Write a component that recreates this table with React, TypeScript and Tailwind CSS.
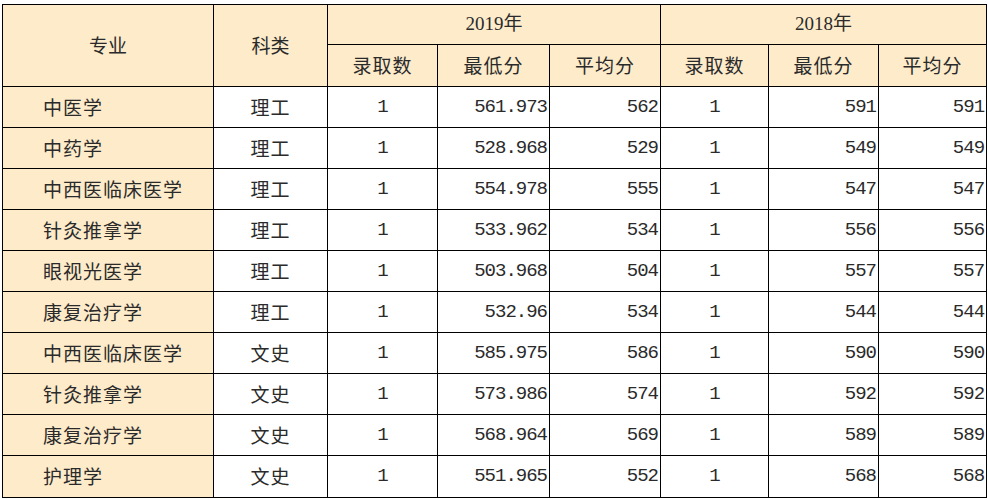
import React from "react";

const rows: [string, string, string, string, string, string, string, string][] = [
  ["中医学", "理工", "1", "561.973", "562", "1", "591", "591"],
  ["中药学", "理工", "1", "528.968", "529", "1", "549", "549"],
  ["中西医临床医学", "理工", "1", "554.978", "555", "1", "547", "547"],
  ["针灸推拿学", "理工", "1", "533.962", "534", "1", "556", "556"],
  ["眼视光医学", "理工", "1", "503.968", "504", "1", "557", "557"],
  ["康复治疗学", "理工", "1", "532.96", "534", "1", "544", "544"],
  ["中西医临床医学", "文史", "1", "585.975", "586", "1", "590", "590"],
  ["针灸推拿学", "文史", "1", "573.986", "574", "1", "592", "592"],
  ["康复治疗学", "文史", "1", "568.964", "569", "1", "589", "589"],
  ["护理学", "文史", "1", "551.965", "552", "1", "568", "568"],
];

const cjk = "font-['Noto_Sans_CJK_SC',sans-serif]";
const num = "font-['Liberation_Mono',monospace] text-[19px] tracking-[-1px]";
const cell = "border border-black p-0";

export default function App() {
  return (
    <div className="bg-white w-[988px] h-[499px] pt-[4px] pl-[2px] text-[#2a2a2a]">
      <table className="border-collapse table-fixed w-[984px]">
        <colgroup>
          <col className="w-[211px]" />
          <col className="w-[114px]" />
          <col className="w-[110px]" />
          <col className="w-[112px]" />
          <col className="w-[111px]" />
          <col className="w-[108px]" />
          <col className="w-[110px]" />
          <col className="w-[108px]" />
        </colgroup>
        <thead>
          <tr className="h-[40px] bg-[#fdebca]">
            <th rowSpan={2} className={`${cell} ${cjk} font-normal text-[19px] text-center`}>专业</th>
            <th rowSpan={2} className={`${cell} ${cjk} font-normal text-[19px] text-center`}>科类</th>
            <th colSpan={3} className={`${cell} font-['Liberation_Serif','Noto_Sans_CJK_SC',serif] font-normal text-[19px] text-center`}>2019年</th>
            <th colSpan={3} className={`${cell} font-['Liberation_Serif','Noto_Sans_CJK_SC',serif] font-normal text-[19px] text-center`}>2018年</th>
          </tr>
          <tr className="h-[42px] bg-[#fdebca]">
            {["录取数", "最低分", "平均分", "录取数", "最低分", "平均分"].map((h, i) => (
              <th key={i} className={`${cell} ${cjk} font-normal text-[19px] text-center tracking-[1px]`}>{h}</th>
            ))}
          </tr>
        </thead>
        <tbody>
          {rows.map((r, i) => (
            <tr key={i} className={i === 9 ? "h-[42px]" : "h-[41px]"}>
              <td className={`${cell} ${cjk} bg-[#fdebca] text-[19px] pl-[40px] tracking-[1px]`}>{r[0]}</td>
              <td className={`${cell} ${cjk} text-[19px] text-center tracking-[1px]`}>{r[1]}</td>
              <td className={`${cell} ${num} text-center`}>{r[2]}</td>
              <td className={`${cell} ${num} text-right pr-[2px]`}>{r[3]}</td>
              <td className={`${cell} ${num} text-right pr-[2px]`}>{r[4]}</td>
              <td className={`${cell} ${num} text-center`}>{r[5]}</td>
              <td className={`${cell} ${num} text-right pr-[2px]`}>{r[6]}</td>
              <td className={`${cell} ${num} text-right pr-[2px]`}>{r[7]}</td>
            </tr>
          ))}
        </tbody>
      </table>
    </div>
  );
}
